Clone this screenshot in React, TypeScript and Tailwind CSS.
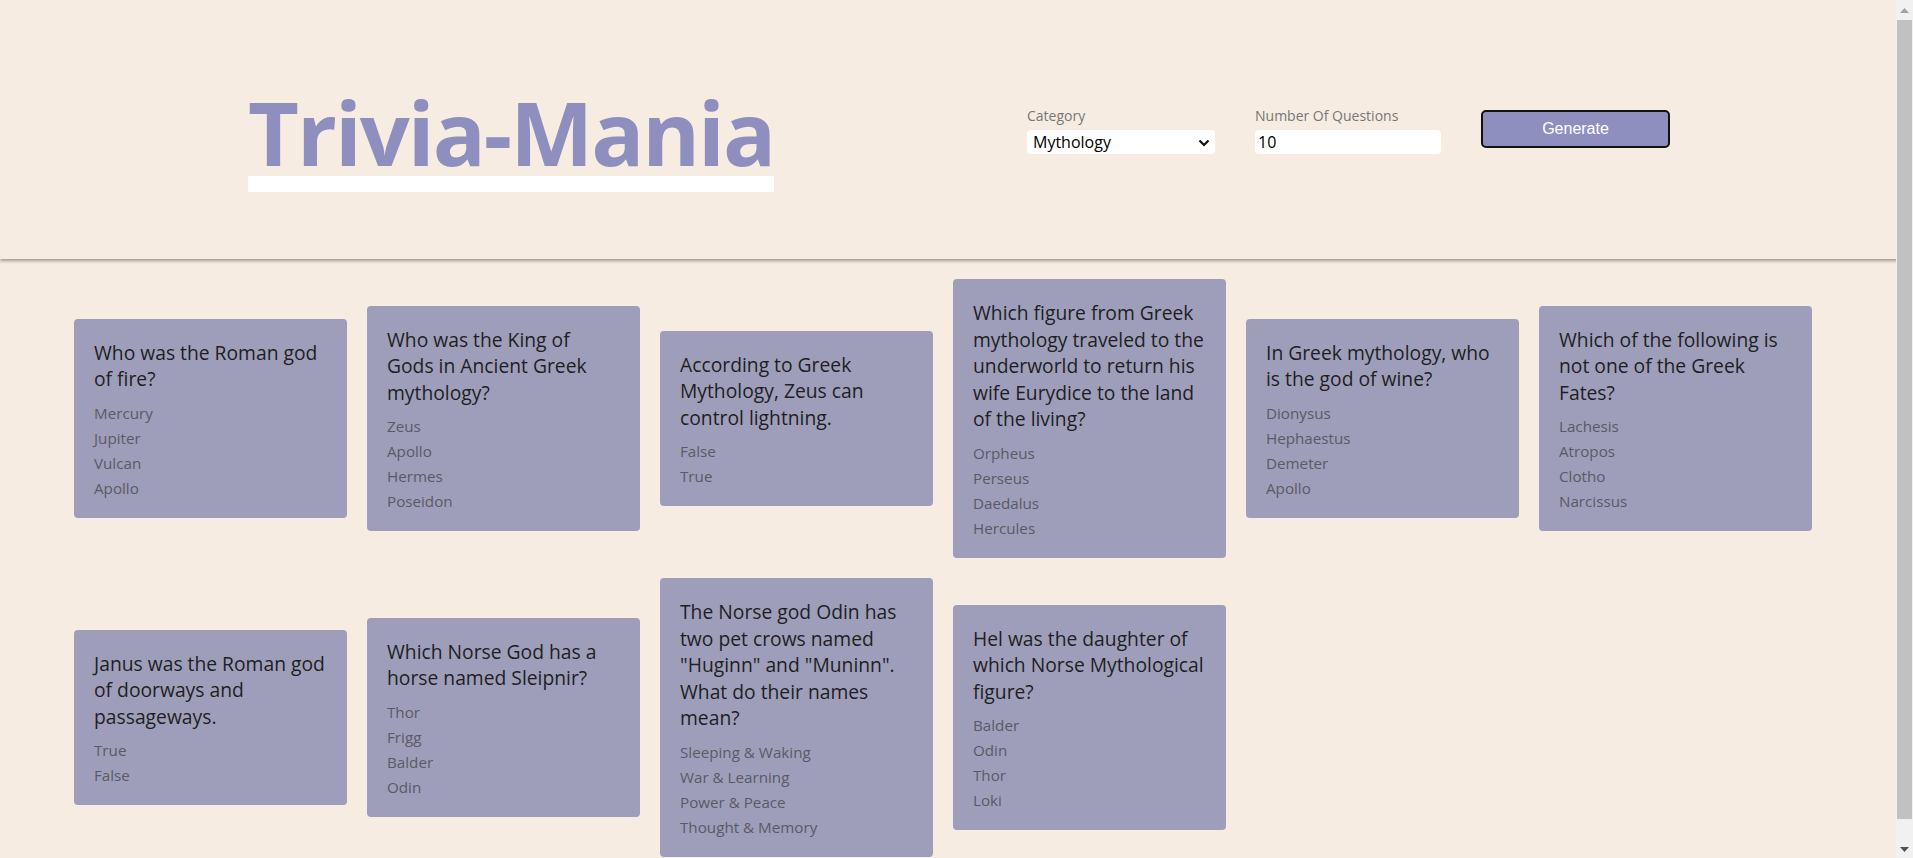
import React from "react";

const questions: { q: string; a: string[] }[] = [
  { q: "Who was the Roman god of fire?", a: ["Mercury", "Jupiter", "Vulcan", "Apollo"] },
  { q: "Who was the King of Gods in Ancient Greek mythology?", a: ["Zeus", "Apollo", "Hermes", "Poseidon"] },
  { q: "According to Greek Mythology, Zeus can control lightning.", a: ["False", "True"] },
  {
    q: "Which figure from Greek mythology traveled to the underworld to return his wife Eurydice to the land of the living?",
    a: ["Orpheus", "Perseus", "Daedalus", "Hercules"],
  },
  { q: "In Greek mythology, who is the god of wine?", a: ["Dionysus", "Hephaestus", "Demeter", "Apollo"] },
  { q: "Which of the following is not one of the Greek Fates?", a: ["Lachesis", "Atropos", "Clotho", "Narcissus"] },
  { q: "Janus was the Roman god of doorways and passageways.", a: ["True", "False"] },
  { q: "Which Norse God has a horse named Sleipnir?", a: ["Thor", "Frigg", "Balder", "Odin"] },
  {
    q: 'The Norse god Odin has two pet crows named "Huginn" and "Muninn". What do their names mean?',
    a: ["Sleeping & Waking", "War & Learning", "Power & Peace", "Thought & Memory"],
  },
  { q: "Hel was the daughter of which Norse Mythological figure?", a: ["Balder", "Odin", "Thor", "Loki"] },
];

function Card({ q, a }: { q: string; a: string[] }) {
  return (
    <div className="w-[273px] bg-[#9e9eba] rounded-[4px] px-5 pt-[21px] pb-[17px]">
      <h3 className="text-[19.3px] leading-[26.6px] text-[#1e1e24] font-normal">{q}</h3>
      <ul className="mt-[8px]">
        {a.map((x) => (
          <li key={x} className="text-[15.2px] leading-[25px] text-[#5a5a66]">
            {x}
          </li>
        ))}
      </ul>
    </div>
  );
}

function Scrollbar() {
  return (
    <div className="fixed top-0 right-0 w-[17px] h-screen bg-[#f1f1f1] flex flex-col">
      <div className="h-[20px] flex items-center justify-center">
        <svg width="9" height="5" viewBox="0 0 9 5">
          <path d="M0 5 L4.5 0 L9 5 Z" fill="#a3a3a3" />
        </svg>
      </div>
      <div className="h-[799px] mx-[1px] bg-[#c1c1c1]" />
      <div className="flex-1" />
      <div className="h-[17px] flex items-center justify-center">
        <svg width="9" height="5" viewBox="0 0 9 5">
          <path d="M0 0 L9 0 L4.5 5 Z" fill="#505050" />
        </svg>
      </div>
    </div>
  );
}

export default function App() {
  return (
    <div className="min-h-screen bg-[#f6ece2] font-['Open_Sans',sans-serif]">
      <header className="h-[259px] flex items-start pl-[248px] shadow-[0_2px_3px_rgba(0,0,0,0.35)]">
        <div className="w-[779px] pt-[88px]">
          <h1 className="inline-block font-bold text-[88px] leading-[88px] tracking-[-2px] text-[#8f8fbf] border-b-[16px] border-white">
            Trivia-Mania
          </h1>
        </div>
        <div className="flex items-start pt-[107px]">
          <div className="w-[188px]">
            <div className="text-[14px] leading-[18px] text-[#777777] mb-[5px]">Category</div>
            <div className="relative h-[24px]">
              <select
                defaultValue="Mythology"
                className="appearance-none w-full h-full bg-white rounded-[4px] pl-[6px] text-[16px] text-black outline-none"
              >
                <option>Mythology</option>
              </select>
              <svg
                className="absolute right-[5px] top-[9px] pointer-events-none"
                width="12"
                height="8"
                viewBox="0 0 12 8"
              >
                <path d="M1.5 1.5 L6 6 L10.5 1.5" stroke="#111" strokeWidth="2.2" fill="none" />
              </svg>
            </div>
          </div>
          <div className="w-[186px] ml-[40px]">
            <div className="text-[14px] leading-[18px] text-[#777777] mb-[5px]">Number Of Questions</div>
            <input
              defaultValue="10"
              className="block w-full h-[24px] bg-white rounded-[4px] pl-[3px] text-[16px] text-black outline-none"
            />
          </div>
          <button className="ml-[40px] mt-[3px] w-[189px] h-[38px] bg-[#8f8fbf] border-2 border-[#111111] rounded-[5px] text-white text-[16px] font-['Liberation_Sans',sans-serif]">
            Generate
          </button>
        </div>
      </header>
      <main className="flex flex-wrap items-center gap-5 pt-5 pl-[74px] pb-[33px]">
        {questions.map((x) => (
          <Card key={x.q} q={x.q} a={x.a} />
        ))}
      </main>
      <Scrollbar />
    </div>
  );
}
